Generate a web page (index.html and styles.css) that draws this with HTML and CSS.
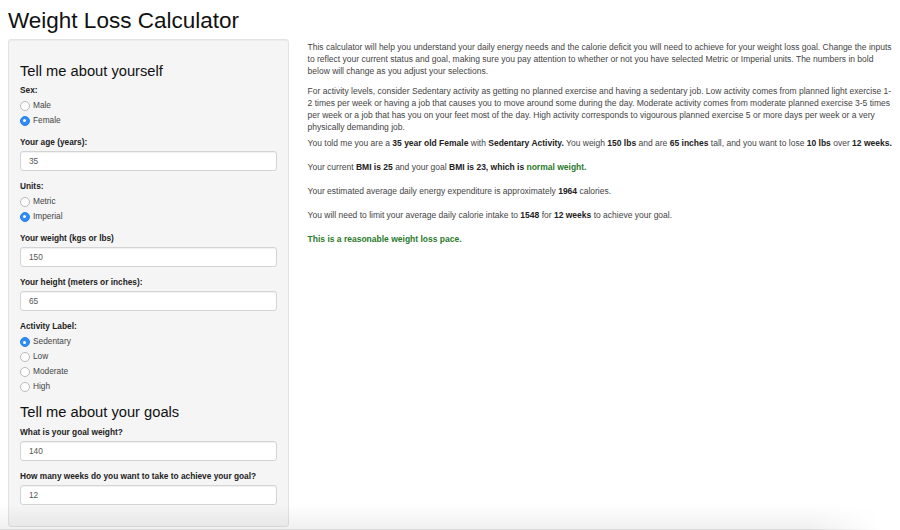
FILE: index.html
```html
<!DOCTYPE html>
<html>
<head>
<meta charset="utf-8">
<title>Weight Loss Calculator</title>
<link rel="stylesheet" href="styles.css">
</head>
<body>
<div class="page">
  <h1 class="title">Weight Loss Calculator</h1>
  <div class="layout">
    <aside class="well">
      <h3 class="section">Tell me about yourself</h3>
      <div class="group radio-group">
        <div class="label">Sex:</div>
        <div class="radio"><span class="dot"></span>Male</div>
        <div class="radio"><span class="dot on"></span>Female</div>
      </div>
      <div class="group">
        <div class="label">Your age (years):</div>
        <div class="input">35</div>
      </div>
      <div class="group radio-group">
        <div class="label">Units:</div>
        <div class="radio"><span class="dot"></span>Metric</div>
        <div class="radio"><span class="dot on"></span>Imperial</div>
      </div>
      <div class="group">
        <div class="label">Your weight (kgs or lbs)</div>
        <div class="input">150</div>
      </div>
      <div class="group">
        <div class="label">Your height (meters or inches):</div>
        <div class="input">65</div>
      </div>
      <div class="group radio-group">
        <div class="label">Activity Label:</div>
        <div class="radio"><span class="dot on"></span>Sedentary</div>
        <div class="radio"><span class="dot"></span>Low</div>
        <div class="radio"><span class="dot"></span>Moderate</div>
        <div class="radio"><span class="dot"></span>High</div>
      </div>
      <h3 class="section second">Tell me about your goals</h3>
      <div class="group">
        <div class="label">What is your goal weight?</div>
        <div class="input">140</div>
      </div>
      <div class="group">
        <div class="label">How many weeks do you want to take to achieve your goal?</div>
        <div class="input">12</div>
      </div>
    </aside>
    <main class="main">
      <p class="intro">This calculator will help you understand your daily energy needs and the calorie deficit you will need to achieve for your weight loss goal. Change the inputs to reflect your current status and goal, making sure you pay attention to whether or not you have selected Metric or Imperial units. The numbers in bold below will change as you adjust your selections.</p>
      <p class="intro second-intro">For activity levels, consider Sedentary activity as getting no planned exercise and having a sedentary job. Low activity comes from planned light exercise 1-2 times per week or having a job that causes you to move around some during the day. Moderate activity comes from moderate planned exercise 3-5 times per week or a job that has you on your feet most of the day. High activity corresponds to vigourous planned exercise 5 or more days per week or a very physically demanding job.</p>
      <p class="result">You told me you are a <b>35 year old Female</b> with <b>Sedentary Activity.</b> You weigh <b>150 lbs</b> and are <b>65 inches</b> tall, and you want to lose <b>10 lbs</b> over <b>12 weeks.</b></p>
      <p class="result">Your current <b>BMI is 25</b> and your goal <b>BMI is 23, which is <span class="green">normal weight.</span></b></p>
      <p class="result">Your estimated average daily energy expenditure is approximately <b>1964</b> calories.</p>
      <p class="result">You will need to limit your average daily calorie intake to <b>1548</b> for <b>12 weeks</b> to achieve your goal.</p>
      <p class="result"><b class="green">This is a reasonable weight loss pace.</b></p>
    </main>
  </div>
</div>
<div class="shadow"></div>
</body>
</html>
```

FILE: styles.css
```css
html, body {
  margin: 0;
  padding: 0;
  background: #fff;
}

body {
  font-family: "Liberation Sans", Arial, sans-serif;
  color: #444;
  font-size: 8.3px;
  line-height: 11.7px;
}

.page {
  padding: 0 8px;
}

.title {
  margin: 0;
  padding-top: 8px;
  font-size: 22.5px;
  line-height: 26px;
  font-weight: normal;
  color: #111;
  height: 31px;
}

.layout {
  display: flex;
  align-items: flex-start;
  gap: 19px;
}

.well {
  width: 283px;
  box-sizing: border-box;
  background: #f5f5f5;
  border: 1px solid #e3e3e3;
  border-radius: 3px;
  padding: 12px 11px 12px 11px;
  box-shadow: inset 0 1px 1px rgba(0,0,0,0.04);
}

.section {
  margin: 11px 0 4.5px;
  font-size: 14.7px;
  line-height: 16px;
  font-weight: normal;
  color: #111;
}

.section.second {
  margin-top: 9px;
  margin-bottom: 6px;
}

.group {
  margin-bottom: 9px;
}

.radio-group {
  margin-bottom: 7.8px;
}

.label {
  font-weight: bold;
  color: #222;
  margin-bottom: 3px;
  line-height: 12px;
}

.radio-group .label {
  margin-bottom: 2.5px;
}

.radio {
  display: flex;
  align-items: center;
  height: 15px;
  color: #444;
}

.dot {
  width: 8px;
  height: 8px;
  border: 1px solid #b9b9b9;
  border-radius: 50%;
  background: #fff;
  margin: 0 3.5px 0 -0.5px;
  box-sizing: content-box;
  flex: none;
}

.dot.on {
  background: #2f8cf4;
  border-color: #2a82e6;
  position: relative;
}

.dot.on::after {
  content: "";
  position: absolute;
  width: 3px;
  height: 3px;
  border-radius: 50%;
  background: #fff;
  left: 2.5px;
  top: 2.5px;
}

.input {
  height: 20px;
  box-sizing: border-box;
  background: #fff;
  border: 1px solid #d4d4d4;
  border-radius: 3px;
  box-shadow: inset 0 1px 1px rgba(0,0,0,0.06);
  padding: 0 8px;
  line-height: 18px;
  color: #555;
}

.main {
  width: 590px;
  padding-top: 3px;
  font-size: 8.5px;
  line-height: 11.8px;
}

.main p {
  margin: 0;
}

.intro {
  margin-bottom: 9px !important;
}

.second-intro {
  margin-bottom: 4px !important;
}

.result {
  margin-bottom: 12.4px !important;
}

.main b {
  color: #222;
}

.green,
.main b.green {
  color: #2b7a2b;
}

.shadow {
  position: fixed;
  left: 0;
  bottom: 0;
  width: 880px;
  height: 26px;
  background: linear-gradient(to bottom, rgba(0,0,0,0), rgba(0,0,0,0.06));
  border-bottom: 1px solid #dcdcdc;
  box-sizing: border-box;
  -webkit-mask-image: linear-gradient(to right, #000 92%, transparent 100%);
  mask-image: linear-gradient(to right, #000 92%, transparent 100%);
  pointer-events: none;
}
```
